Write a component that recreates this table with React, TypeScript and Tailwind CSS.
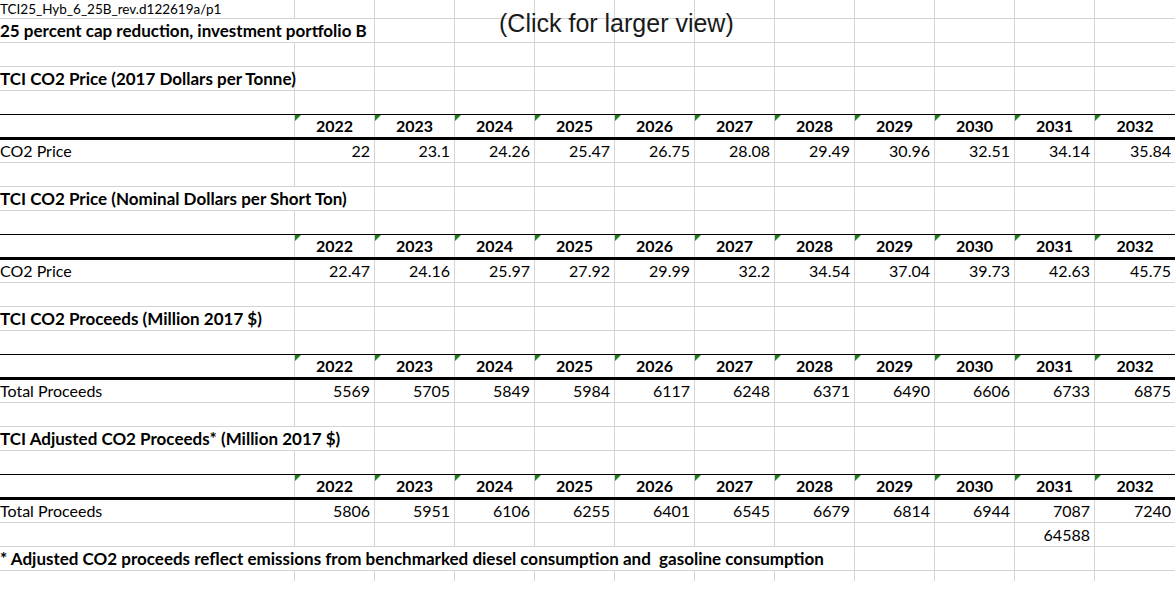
import React from 'react';

const years = ['2022', '2023', '2024', '2025', '2026', '2027', '2028', '2029', '2030', '2031', '2032'];

const tables = [
  {
    title: 'TCI CO2 Price (2017 Dollars per Tonne)',
    titleSpan: 0,
    label: 'CO2 Price',
    values: ['22', '23.1', '24.26', '25.47', '26.75', '28.08', '29.49', '30.96', '32.51', '34.14', '35.84'],
  },
  {
    title: 'TCI CO2 Price (Nominal Dollars per Short Ton)',
    titleSpan: 1,
    label: 'CO2 Price',
    values: ['22.47', '24.16', '25.97', '27.92', '29.99', '32.2', '34.54', '37.04', '39.73', '42.63', '45.75'],
  },
  {
    title: 'TCI CO2 Proceeds (Million 2017 $)',
    titleSpan: 0,
    label: 'Total Proceeds',
    values: ['5569', '5705', '5849', '5984', '6117', '6248', '6371', '6490', '6606', '6733', '6875'],
  },
  {
    title: 'TCI Adjusted CO2 Proceeds* (Million 2017 $)',
    titleSpan: 1,
    label: 'Total Proceeds',
    values: ['5806', '5951', '6106', '6255', '6401', '6545', '6679', '6814', '6944', '7087', '7240'],
  },
];

// a plain sheet row: column A plus 11 year columns; `span` hides the gridlines the label overflows
function Row({
  label,
  bold,
  span = 0,
  values,
  height = 'h-[24px]',
  bottom = 'border-b border-[#d4d4d4]',
  small,
}: {
  label?: string;
  bold?: boolean;
  span?: number;
  values?: string[];
  height?: string;
  bottom?: string;
  small?: boolean;
}) {
  const size = small ? 'text-[13.5px]' : bold ? 'text-[17px]' : 'text-[16px]';
  return (
    <div className={`flex ${height} ${bottom}`}>
      <div
        className={`w-[295px] shrink-0 flex items-center whitespace-pre relative z-10 ${
          span > 0 ? '' : 'border-r border-[#d4d4d4]'
        } ${bold ? 'font-bold' : ''} ${size}`}
      >
        {label}
      </div>
      {years.map((y, i) => (
        <div
          key={y}
          className={`w-[80px] shrink-0 flex items-center justify-end pr-[4px] text-[16px] ${
            i + 1 < span || i === 10 ? '' : 'border-r border-[#d4d4d4]'
          }`}
        >
          {values?.[i]}
        </div>
      ))}
    </div>
  );
}

function HeaderRow() {
  return (
    <div className="flex h-[25px] border-b-[3px] border-black">
      <div className="w-[295px] shrink-0 border-r border-[#d4d4d4]" />
      {years.map((y, i) => (
        <div
          key={y}
          className={`relative w-[80px] shrink-0 flex items-center justify-center font-bold text-[16px] ${
            i === 10 ? '' : 'border-r border-[#d4d4d4]'
          }`}
        >
          <span className="absolute left-0 top-0 w-0 h-0 border-t-[6px] border-r-[6px] border-t-[#1a7f1a] border-r-transparent" />
          {y}
        </div>
      ))}
    </div>
  );
}

export default function App() {
  return (
    <div className="relative w-[1175px] h-[590px] bg-white overflow-hidden text-black font-[Lato,sans-serif]">
      <Row label="TCI25_Hyb_6_25B_rev.d122619a/p1" small height="h-[19px]" />
      <Row label="25 percent cap reduction, investment portfolio B" bold span={1} />
      <Row />
      {tables.map((t, idx) => (
        <React.Fragment key={idx}>
          {idx > 0 && <Row />}
          <Row label={t.title} bold span={t.titleSpan} />
          <Row bottom="border-b border-black" />
          <HeaderRow />
          <Row label={t.label} values={t.values} height="h-[23px]" />
        </React.Fragment>
      ))}
      <Row values={['', '', '', '', '', '', '', '', '', '64588', '']} />
      <Row
        label="* Adjusted CO2 proceeds reflect emissions from benchmarked diesel consumption and  gasoline consumption"
        bold
        span={7}
      />
      <Row height="h-[10px]" bottom="" />

      <div className="absolute left-[499px] top-[7px] text-[25px] leading-[32px] text-[#1a1a1a] font-['Liberation_Sans',Arial,sans-serif] pointer-events-none">
        (Click for larger view)
      </div>
    </div>
  );
}
